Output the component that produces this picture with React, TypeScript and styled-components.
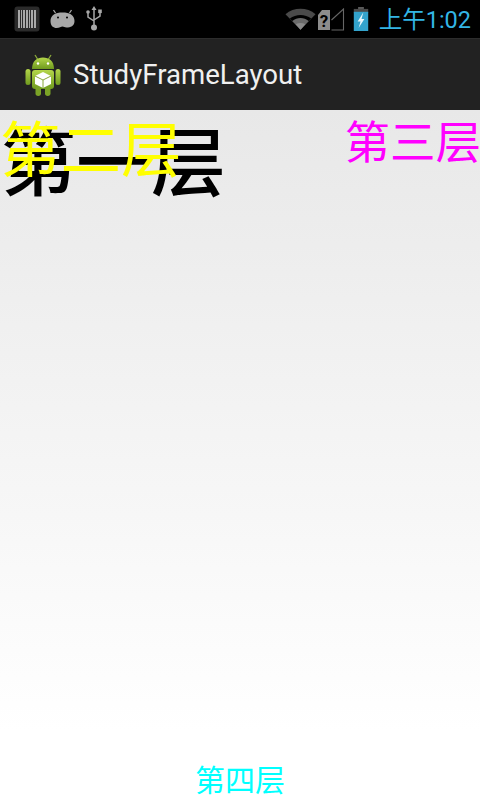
import styled, { createGlobalStyle } from "styled-components";

const GlobalStyle = createGlobalStyle`
  html, body {
    margin: 0;
    padding: 0;
    background: #000;
  }
`;

const CJK = `"Roboto", "Noto Sans CJK SC", sans-serif`;

// status bar icons
const BarcodeIcon = () => (
  <svg width="26" height="26" viewBox="0 0 26 26">
    <rect x="0.5" y="0.5" width="25" height="25" rx="3" fill="#2b2b2b" />
    <g fill="#a8a8a8">
      <rect x="4" y="4" width="2" height="18" />
      <rect x="7" y="4" width="1" height="18" />
      <rect x="9" y="4" width="2" height="18" />
      <rect x="12" y="4" width="2" height="18" />
      <rect x="15" y="4" width="1" height="18" />
      <rect x="17" y="4" width="2" height="18" />
      <rect x="20" y="4" width="2" height="18" />
    </g>
  </svg>
);

const AndroidHeadIcon = () => (
  <svg width="27" height="20" viewBox="0 0 26 20">
    <path d="M6 4 L4 1 M20 4 L22 1" stroke="#a8a8a8" strokeWidth="1.3" />
    <path
      d="M1 12 C1 6 6 3.5 13 3.5 C20 3.5 25 6 25 12 C25 17 21 18.5 17 18.5 C15 18.5 14.5 17.5 13 17.5 C11.5 17.5 10 19 7 19 C4 19 1 17 1 12 Z"
      fill="#a8a8a8"
    />
    <circle cx="8.5" cy="8.5" r="1" fill="#000" />
    <circle cx="17.5" cy="8.5" r="1" fill="#000" />
  </svg>
);

const UsbIcon = () => (
  <svg width="18" height="26" viewBox="0 0 18 26">
    <path d="M9 3 V20 M3 7 V11 L9 15 M15 6 V10 L9 14" stroke="#a8a8a8" strokeWidth="1.5" fill="none" />
    <path d="M9 0 L11.5 4 H6.5 Z" fill="#a8a8a8" />
    <circle cx="3" cy="6" r="1.8" fill="#a8a8a8" />
    <rect x="13.2" y="3.5" width="3.6" height="3.6" fill="#a8a8a8" />
    <circle cx="9" cy="21.5" r="3" fill="#a8a8a8" />
  </svg>
);

const WifiIcon = () => (
  <svg width="31" height="22" viewBox="0 0 32 22">
    <path d="M16 22 L0.5 6 C9 -1.5 23 -1.5 31.5 6 Z" fill="#4a4a4a" />
    <path d="M16 22 L5 10.5 C11 5.5 21 5.5 27 10.5 Z" fill="#000" />
    <path d="M16 22 L7.5 13 C12.5 9 19.5 9 24.5 13 Z" fill="#6a6a6a" />
    <path d="M16 22 L11 16.5 C14 14.8 18 14.8 21 16.5 Z" fill="#8a8a8a" />
  </svg>
);

const NoSimIcon = () => (
  <svg width="28" height="23" viewBox="0 0 28 23">
    <path d="M1 7 L5 2 H13 V22 H1 Z" fill="#8c8c8c" />
    <text x="7" y="19" fontSize="17" fontWeight="700" fontFamily="Roboto, sans-serif" textAnchor="middle" fill="#000">
      ?
    </text>
    <path d="M14.5 12 L26.5 1 V22 H14.5" fill="none" stroke="#666" strokeWidth="1.1" />
  </svg>
);

const BatteryIcon = () => (
  <svg width="16" height="24" viewBox="0 0 16 25">
    <rect x="5" y="0" width="6" height="3" fill="#5a5a5a" />
    <rect x="0.5" y="2" width="15" height="4" fill="#4a4a4a" />
    <rect x="0.5" y="5" width="15" height="20" fill="#33a3cc" />
    <path d="M10.5 5.5 L4.5 15 H7.5 L5.5 22 L11.5 12.5 H8.5 Z" fill="#e8f6fb" />
  </svg>
);

const AppIcon = () => (
  <svg width="36" height="42" viewBox="0 0 36 42">
    <defs>
      <linearGradient id="droid" x1="0" y1="0" x2="0" y2="1">
        <stop offset="0" stopColor="#b4d64a" />
        <stop offset="1" stopColor="#6f9a1e" />
      </linearGradient>
    </defs>
    <path d="M10 1 L12.5 5 M26 1 L23.5 5" stroke="#8aa83a" strokeWidth="1.3" />
    <path d="M7 15 C7 7 12 3.5 18 3.5 C24 3.5 29 7 29 15 Z" fill="url(#droid)" />
    <circle cx="13" cy="9.5" r="1.2" fill="#fff" />
    <circle cx="23" cy="9.5" r="1.2" fill="#fff" />
    <rect x="7" y="16" width="22" height="19" rx="3" fill="url(#droid)" />
    <rect x="0.5" y="15" width="5" height="16" rx="2.5" fill="url(#droid)" />
    <rect x="30.5" y="15" width="5" height="16" rx="2.5" fill="url(#droid)" />
    <rect x="10.5" y="32" width="5.5" height="10" rx="2.7" fill="#7ba326" />
    <rect x="20" y="32" width="5.5" height="10" rx="2.7" fill="#7ba326" />
    <path d="M18 18 L26 22 V30 L18 34 L10 30 V22 Z" fill="#fff" />
    <path d="M18 26 L26 22 M18 26 L10 22 M18 26 V34" stroke="#8aa83a" strokeWidth="1" />
  </svg>
);

const App = () => {
  return (
    <>
      <GlobalStyle />
      <Screen>
        <StatusBar>
          <NotificationIcons>
            <BarcodeIcon />
            <AndroidHeadIcon />
            <UsbIcon />
          </NotificationIcons>
          <SystemIcons>
            <WifiIcon />
            <NoSimIcon />
            <BatterySlot>
              <BatteryIcon />
            </BatterySlot>
            <Clock>上午1:02</Clock>
          </SystemIcons>
        </StatusBar>
        <ActionBar>
          <AppIcon />
          <AppTitle>StudyFrameLayout</AppTitle>
        </ActionBar>
        <FrameLayout>
          <Layer $size={75} $weight={500} $color="#000000" $top={11} $left={1}>
            第一层
          </Layer>
          <Layer $size={60.5} $weight={400} $color="#ffff00" $top={7} $left={0}>
            第二层
          </Layer>
          <Layer $size={45.5} $weight={400} $color="#ff00ff" $top={7} $right={-1}>
            第三层
          </Layer>
          <BottomLayer>第四层</BottomLayer>
        </FrameLayout>
      </Screen>
    </>
  );
};
export default App;

const Screen = styled.div`
  width: 480px;
  height: 800px;
  display: flex;
  flex-direction: column;
  overflow: hidden;
`;
const StatusBar = styled.header`
  height: 38px;
  flex-shrink: 0;
  background: #000;
  display: flex;
  flex-direction: row;
  align-items: center;
  justify-content: space-between;
  padding: 0 9px 0 14px;
`;
const NotificationIcons = styled.div`
  display: flex;
  align-items: center;
  gap: 9px;
`;
const SystemIcons = styled.div`
  display: flex;
  align-items: center;
  gap: 1px;
`;
const BatterySlot = styled.span`
  display: flex;
  margin-left: 7px;
`;
const Clock = styled.span`
  font-family: ${CJK};
  font-size: 23.5px;
  color: #33b5e5;
  margin-left: 9px;
  position: relative;
  top: -1px;
`;
const ActionBar = styled.div`
  height: 71px;
  flex-shrink: 0;
  background: #222222;
  border-top: 1px solid #2c2c2c;
  display: flex;
  align-items: center;
  padding-left: 25px;
  gap: 12px;
`;
const AppTitle = styled.h1`
  margin: 0;
  font-family: "Roboto", sans-serif;
  font-size: 27.6px;
  font-weight: 400;
  color: #f0f0f0;
`;
const FrameLayout = styled.main`
  position: relative;
  flex-grow: 1;
  background: linear-gradient(#e8e8e8, #ffffff 90%);
`;
const Layer = styled.span<{
  $size: number;
  $weight: number;
  $color: string;
  $top: number;
  $left?: number;
  $right?: number;
}>`
  position: absolute;
  top: ${(p) => p.$top}px;
  ${(p) => (p.$left !== undefined ? `left: ${p.$left}px;` : "")}
  ${(p) => (p.$right !== undefined ? `right: ${p.$right}px;` : "")}
  font-family: ${CJK};
  font-size: ${(p) => p.$size}px;
  font-weight: ${(p) => p.$weight};
  line-height: 1.17;
  color: ${(p) => p.$color};
  white-space: nowrap;
`;
const BottomLayer = styled.span`
  position: absolute;
  bottom: 2px;
  left: 0;
  right: 0;
  text-align: center;
  font-family: ${CJK};
  font-size: 30px;
  line-height: 1.17;
  color: #00ffff;
`;
